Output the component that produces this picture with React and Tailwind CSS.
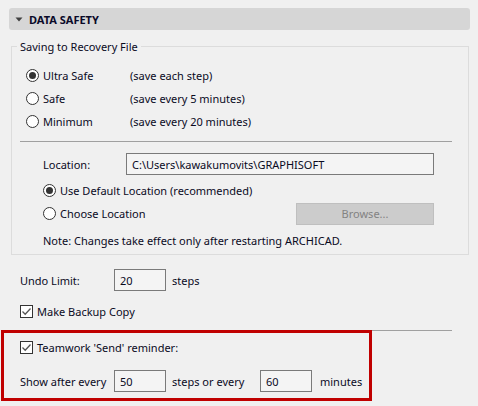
import React from "react";

function Radio({ checked }) {
  return (
    <span className="flex h-[13px] w-[13px] shrink-0 items-center justify-center rounded-full border border-[#333333] bg-white">
      {checked && <span className="h-[7px] w-[7px] rounded-full bg-[#333333]" />}
    </span>
  );
}

function Check() {
  return (
    <span className="flex h-[13px] w-[13px] shrink-0 items-center justify-center border border-[#333333] bg-white">
      <svg width="11" height="11" viewBox="0 0 11 11">
        <path d="M1.5 5.5 L4.2 8.2 L9.5 2.5" fill="none" stroke="#555555" strokeWidth="1.3" />
      </svg>
    </span>
  );
}

function Field({ value, w = "w-[52px]" }) {
  return (
    <div className={`flex h-[22px] ${w} shrink-0 items-center border border-[#7a7a7a] bg-[#f4f4f4] pl-[5px] leading-none`}>
      {value}
    </div>
  );
}

export default function App() {
  return (
    <div
      className="relative h-[406px] w-[478px] overflow-hidden whitespace-nowrap bg-[#f0f0f0] text-[11px] leading-none text-[#0a0a1e]"
      style={{ fontFamily: '"Noto Sans", "Open Sans", sans-serif' }}
    >
      {/* header */}
      <div className="ml-[9px] mr-[8px] mt-[8px] flex h-[22px] items-center rounded-[3px] bg-[#d6d6d6]">
        <svg className="ml-[6px]" width="8" height="5" viewBox="0 0 8 5">
          <path d="M0.5 0.5 L7.5 0.5 L4 4.5 Z" fill="#404040" />
        </svg>
        <span className="ml-[6px] font-bold text-[11px] text-[#0a0a28]">DATA SAFETY</span>
      </div>

      {/* group */}
      <div className="relative ml-[11px] mr-[9px] mt-[16px] border border-[#dcdcdc] pb-[6px] pt-[17px]">
        <span className="absolute left-[5px] top-[-8px] bg-[#f0f0f0] px-[3px] leading-[16px]">
          Saving to Recovery File
        </span>

        <div className="flex h-[23px] items-center pl-[14px]">
          <Radio checked />
          <span className="ml-[4px] w-[87px]">Ultra Safe</span>
          <span>(save each step)</span>
        </div>
        <div className="flex h-[23px] items-center pl-[14px]">
          <Radio />
          <span className="ml-[4px] w-[87px]">Safe</span>
          <span>(save every 5 minutes)</span>
        </div>
        <div className="flex h-[23px] items-center pl-[14px]">
          <Radio />
          <span className="ml-[4px] w-[87px]">Minimum</span>
          <span>(save every 20 minutes)</span>
        </div>

        <div className="ml-[8px] mr-[16px] mt-[8px] h-px bg-[#a0a0a0]" />

        <div className="ml-[31px] mt-[11px] flex h-[22px] items-center">
          <span className="w-[83px]">Location:</span>
          <Field value="C:\Users\kawakumovits\GRAPHISOFT" w="w-[308px]" />
        </div>
        <div className="ml-[31px] mt-[4px] flex h-[23px] items-center">
          <Radio checked />
          <span className="ml-[4px]">Use Default Location (recommended)</span>
        </div>
        <div className="ml-[31px] flex h-[23px] items-center">
          <Radio />
          <span className="ml-[4px]">Choose Location</span>
          <div className="ml-auto mr-[34px] flex h-[22px] w-[138px] items-center justify-center border border-[#bfbfbf] bg-[#cccccc] text-[#838383]">
            Browse...
          </div>
        </div>
        <div className="ml-[31px] mt-[7px] flex h-[16px] items-center">
          Note: Changes take effect only after restarting ARCHICAD.
        </div>
      </div>

      {/* undo */}
      <div className="ml-[20px] mt-[14px] flex h-[22px] items-center">
        <span className="w-[94px]">Undo Limit:</span>
        <Field value="20" />
        <span className="ml-[6px]">steps</span>
      </div>
      <div className="ml-[20px] mt-[11px] flex h-[19px] items-center">
        <Check />
        <span className="ml-[4px]">Make Backup Copy</span>
      </div>

      <div className="ml-[20px] mr-[26px] mt-[9px] h-px bg-[#a0a0a0]" />

      <div className="ml-[20px] mt-[7px] flex h-[19px] items-center">
        <Check />
        <span className="ml-[4px]">Teamwork 'Send' reminder:</span>
      </div>
      <div className="ml-[20px] mt-[13px] flex h-[22px] items-center">
        <span className="w-[94px]">Show after every</span>
        <Field value="50" />
        <span className="ml-[6px] w-[88px]">steps or every</span>
        <Field value="60" />
        <span className="ml-[8px]">minutes</span>
      </div>

      {/* red annotation */}
      <div className="pointer-events-none absolute left-[1px] top-[330px] h-[71px] w-[371px] border-[3px] border-[#c00000]" />
    </div>
  );
}
